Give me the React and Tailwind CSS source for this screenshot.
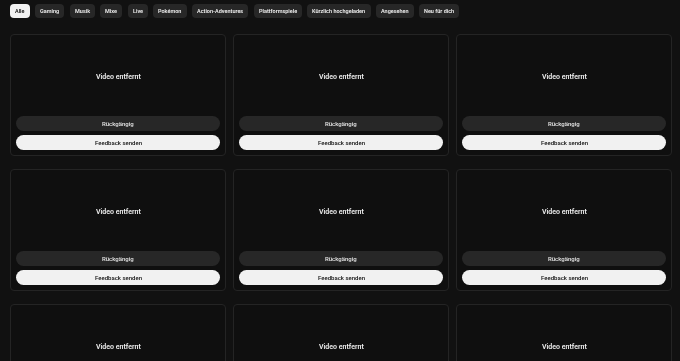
import React from "react";

const chips = ["Alle","Gaming","Musik","Mixe","Live","Pokémon","Action-Adventures","Plattformspiele","Kürzlich hochgeladen","Angesehen","Neu für dich"];

function Card() {
  return (
    <div className="h-[122px] rounded-[4px] border border-[#242424] bg-[#0f0f0f] flex flex-col px-[5px] pb-[5px]">
      <div className="flex-1 flex items-center justify-center pt-[3px]">
        <span className="will-change-transform text-[7px] font-semibold text-[#f1f1f1]">Video entfernt</span>
      </div>
      <div className="h-[15px] rounded-full bg-[#272727] flex items-center justify-center">
        <span className="will-change-transform text-[6px] font-medium text-[#e8e8e8]">Rückgängig</span>
      </div>
      <div className="mt-[4px] h-[15px] rounded-full bg-[#f1f1f1] flex items-center justify-center">
        <span className="will-change-transform text-[6px] font-medium text-[#0f0f0f]">Feedback senden</span>
      </div>
    </div>
  );
}

export default function App() {
  return (
    <div className="antialiased w-[680px] h-[361px] overflow-hidden bg-[#111111] px-[10px] pt-[4px]" style={{fontFamily: "Roboto, 'Liberation Sans', sans-serif"}}>
      <div className="flex gap-[5.5px]">
        {chips.map((c, i) => (
          <div key={c} className={`h-[14px] px-[5px] rounded-[4px] flex items-center whitespace-nowrap ${i === 0 ? "bg-[#f1f1f1] text-[#0f0f0f]" : "bg-[#272727] text-[#f1f1f1]"}`}>
            <span className="will-change-transform text-[5.5px] font-semibold">{c}</span>
          </div>
        ))}
      </div>
      <div className="mt-[16px] grid grid-cols-3 gap-x-[7px] gap-y-[13px] w-[662px]">
        {Array.from({length: 9}).map((_, i) => <Card key={i} />)}
      </div>
    </div>
  );
}
